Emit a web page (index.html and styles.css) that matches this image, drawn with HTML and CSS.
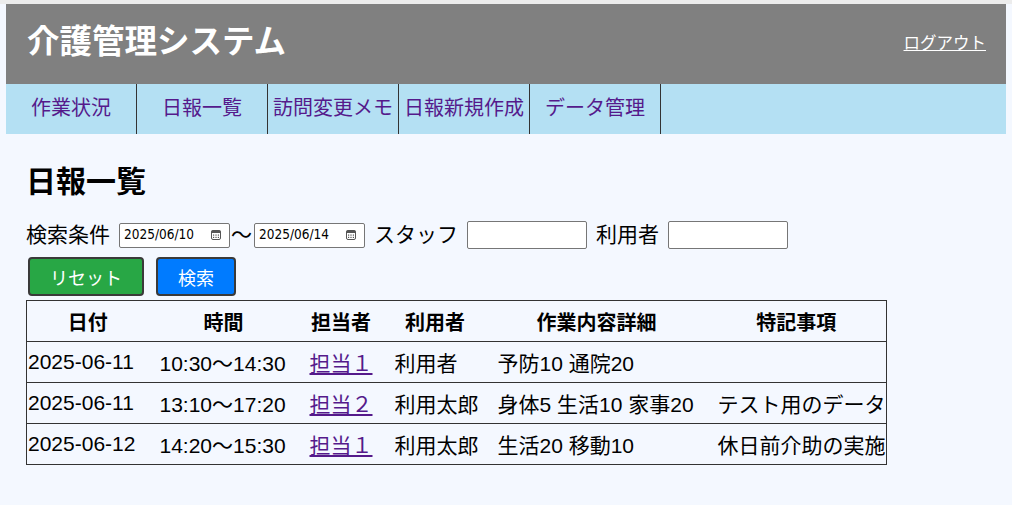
FILE: index.html
```html
<!DOCTYPE html>
<html lang="ja">

<head>
  <meta charset="UTF-8">
  <meta name="viewport" content="width=device-width, initial-scale=1.0">
  <title>日報一覧 - 介護管理システム</title>
  <link rel="stylesheet" href="styles.css">
</head>

<body>
  <header class="site-header">
    <h1 class="site-title">介護管理システム</h1>
    <a href="#" class="logout">ログアウト</a>
  </header>

  <nav class="main-nav">
    <a href="#" class="nav-item">作業状況</a>
    <a href="#" class="nav-item">日報一覧</a>
    <a href="#" class="nav-item">訪問変更メモ</a>
    <a href="#" class="nav-item">日報新規作成</a>
    <a href="#" class="nav-item">データ管理</a>
  </nav>

  <main class="content">
    <h2 class="page-title">日報一覧</h2>

    <form class="search" onsubmit="return false">
      <div class="search-row">
        <span class="label">検索条件</span>
        <span class="date-range">
          <span class="date-field">
            <span class="date-text">2025/06/10</span>
            <svg class="cal-icon" width="10" height="10" viewBox="0 0 10 10">
              <rect x="0.5" y="0.5" width="9" height="9" rx="1.5" fill="none" stroke="#555" />
              <rect x="0.5" y="0.5" width="9" height="2.5" fill="#555" />
              <rect x="2" y="4.5" width="1.2" height="1.2" fill="#555" />
              <rect x="4.4" y="4.5" width="1.2" height="1.2" fill="#555" />
              <rect x="6.8" y="4.5" width="1.2" height="1.2" fill="#555" />
              <rect x="2" y="6.8" width="1.2" height="1.2" fill="#555" />
              <rect x="4.4" y="6.8" width="1.2" height="1.2" fill="#555" />
              <rect x="6.8" y="6.8" width="1.2" height="1.2" fill="#555" />
            </svg>
          </span>
          <span class="tilde">～</span>
          <span class="date-field">
            <span class="date-text">2025/06/14</span>
            <svg class="cal-icon" width="10" height="10" viewBox="0 0 10 10">
              <rect x="0.5" y="0.5" width="9" height="9" rx="1.5" fill="none" stroke="#555" />
              <rect x="0.5" y="0.5" width="9" height="2.5" fill="#555" />
              <rect x="2" y="4.5" width="1.2" height="1.2" fill="#555" />
              <rect x="4.4" y="4.5" width="1.2" height="1.2" fill="#555" />
              <rect x="6.8" y="4.5" width="1.2" height="1.2" fill="#555" />
              <rect x="2" y="6.8" width="1.2" height="1.2" fill="#555" />
              <rect x="4.4" y="6.8" width="1.2" height="1.2" fill="#555" />
              <rect x="6.8" y="6.8" width="1.2" height="1.2" fill="#555" />
            </svg>
          </span>
        </span>
        <span class="label">スタッフ</span>
        <input type="text" class="text-input">
        <span class="label">利用者</span>
        <input type="text" class="text-input">
      </div>

      <div class="button-row">
        <button type="button" class="btn btn-reset">リセット</button>
        <button type="submit" class="btn btn-search">検索</button>
      </div>
    </form>

    <table class="report-table">
      <colgroup>
        <col class="col-date">
        <col class="col-time">
        <col class="col-staff">
        <col class="col-user">
        <col class="col-work">
        <col class="col-note">
      </colgroup>
      <thead>
        <tr>
          <th>日付</th>
          <th>時間</th>
          <th>担当者</th>
          <th>利用者</th>
          <th>作業内容詳細</th>
          <th>特記事項</th>
        </tr>
      </thead>
      <tbody>
        <tr>
          <td>2025-06-11</td>
          <td>10:30～14:30</td>
          <td><a href="#" class="staff-link">担当１</a></td>
          <td>利用者</td>
          <td>予防10 通院20</td>
          <td></td>
        </tr>
        <tr>
          <td>2025-06-11</td>
          <td>13:10～17:20</td>
          <td><a href="#" class="staff-link">担当２</a></td>
          <td>利用太郎</td>
          <td>身体5 生活10 家事20</td>
          <td>テスト用のデータ</td>
        </tr>
        <tr>
          <td>2025-06-12</td>
          <td>14:20～15:30</td>
          <td><a href="#" class="staff-link">担当１</a></td>
          <td>利用太郎</td>
          <td>生活20 移動10</td>
          <td>休日前介助の実施</td>
        </tr>
      </tbody>
    </table>
  </main>
</body>

</html>
```

FILE: styles.css
```css
html {
  background-color: #f4f8ff;
}

body {
  margin: 0;
  padding: 0 6px;
  border-top: 4px solid #ececec;
  background-color: #f4f8ff;
  color: #000;
  font-family: "Liberation Sans", "Noto Sans CJK JP", sans-serif;
}

.site-header {
  display: flex;
  align-items: center;
  justify-content: space-between;
  height: 80px;
  padding: 0 20px 4px 21px;
  box-sizing: border-box;
  background-color: #808080;
}

.site-title {
  margin: 0;
  color: #fff;
  font-size: 32.5px;
  font-weight: 700;
  line-height: 40px;
}

.logout {
  color: #fff;
  font-size: 16.5px;
}

.main-nav {
  display: flex;
  height: 50px;
  background-color: #b4e0f3;
}

.nav-item {
  display: flex;
  align-items: center;
  justify-content: center;
  width: 131px;
  padding-bottom: 5px;
  box-sizing: border-box;
  border-right: 1px solid #333;
  color: #551a8b;
  font-size: 20px;
  text-decoration: none;
  white-space: nowrap;
}

.content {
  padding: 30px 20px 40px;
}

.page-title {
  margin: 0 0 21px;
  font-size: 30px;
  font-weight: 700;
  line-height: 36px;
}

.search-row {
  display: flex;
  align-items: center;
  gap: 9px;
  height: 28px;
  font-size: 21px;
  line-height: 28px;
}

.search-row .text-input:first-of-type {
  margin-right: 0;
}

.date-range {
  display: flex;
  align-items: center;
  gap: 1px;
}

.tilde {
  margin-right: 1px;
}

.date-field {
  display: flex;
  align-items: center;
  justify-content: space-between;
  width: 111px;
  height: 25px;
  box-sizing: border-box;
  padding: 0 8px 0 4px;
  border: 1px solid #767676;
  border-radius: 2px;
  background-color: #fff;
  font-family: "DejaVu Sans Condensed", "DejaVu Sans", sans-serif;
  font-stretch: condensed;
  font-size: 13.5px;
  line-height: 1;
}

.text-input {
  width: 120px;
  height: 28px;
  box-sizing: border-box;
  margin: 0;
  border: 1px solid #767676;
  border-radius: 2px;
  background-color: #fff;
}

.button-row {
  display: flex;
  gap: 12px;
  margin: 8px 0 4px 2px;
}

.btn {
  height: 39px;
  padding: 0 20px;
  border: 2px solid #3a3a3a;
  border-radius: 4px;
  color: #fff;
  font-family: inherit;
  font-size: 18px;
}

.btn-reset {
  background-color: #28a745;
}

.btn-search {
  background-color: #007bff;
}

.report-table {
  width: 860px;
  table-layout: fixed;
  border-collapse: collapse;
  border: 1px solid #333;
  font-size: 21px;
}

.col-date { width: 122px; }
.col-time { width: 150px; }
.col-staff { width: 85px; }
.col-user { width: 103px; }
.col-work { width: 220px; }
.col-note { width: 180px; }

.report-table th,
.report-table td {
  height: 40px;
  padding: 0 11px;
  border-bottom: 1px solid #333;
  text-align: left;
  white-space: nowrap;
}

.report-table th {
  font-size: 20px;
  font-weight: 700;
  text-align: center;
}

.report-table td:first-child {
  padding-left: 1px;
}

.staff-link {
  color: #551a8b;
}
```
